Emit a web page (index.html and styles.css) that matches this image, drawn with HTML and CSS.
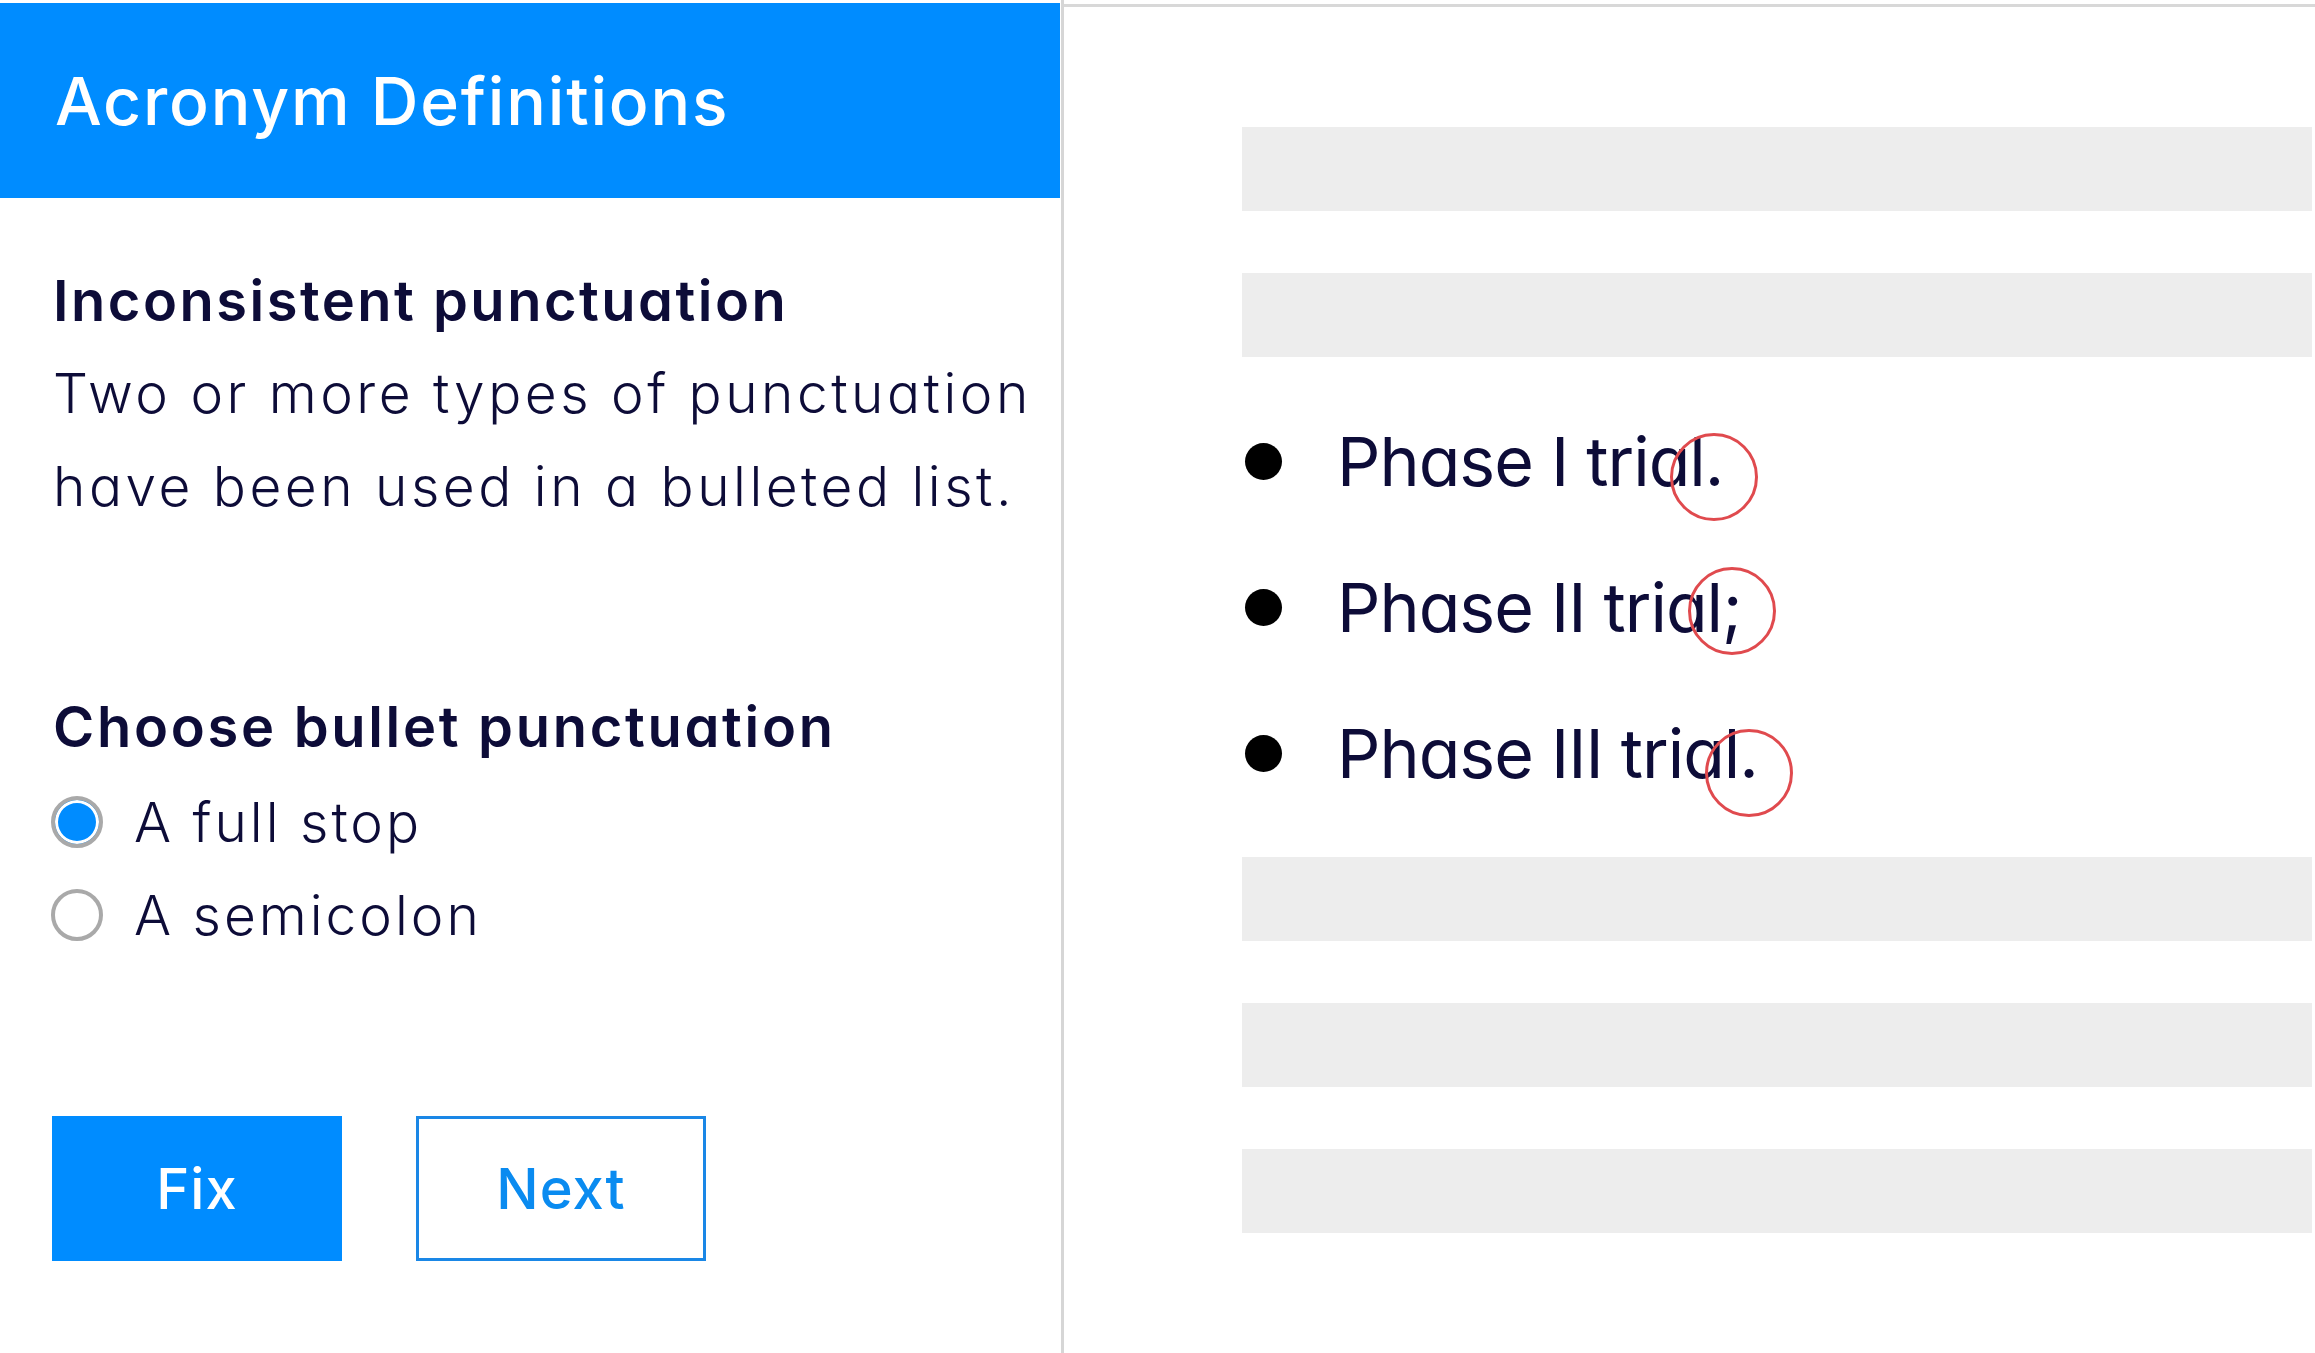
FILE: index.html
```html
<!DOCTYPE html>
<html lang="en">
<head>
<meta charset="utf-8">
<title>Acronym Definitions</title>
<link rel="stylesheet" href="styles.css">
</head>
<body>
<div class="app">
  <aside class="panel">
    <header class="panel-header">
      <h1 class="panel-title">Acronym Definitions</h1>
    </header>
    <section class="issue">
      <h2 class="issue-title">Inconsistent punctuation</h2>
      <p class="issue-text">Two or more types of punctuation have been used in a bulleted list.</p>
    </section>
    <section class="choice">
      <h2 class="choice-title">Choose bullet punctuation</h2>
      <label class="option">
        <span class="radio radio-checked"></span>
        <span class="option-label">A full stop</span>
      </label>
      <label class="option">
        <span class="radio"></span>
        <span class="option-label">A semicolon</span>
      </label>
    </section>
    <div class="actions">
      <button class="btn btn-primary">Fix</button>
      <button class="btn btn-outline">Next</button>
    </div>
  </aside>
  <main class="document">
    <div class="doc-lines">
      <div class="bar"></div>
      <div class="bar"></div>
      <div class="bullet-item"><span class="dot"></span><span class="item-text">Phase I trial<span class="mark mark-1">.</span></span></div>
      <div class="bullet-item"><span class="dot"></span><span class="item-text">Phase II trial<span class="mark mark-2">;</span></span></div>
      <div class="bullet-item"><span class="dot"></span><span class="item-text">Phase III trial<span class="mark mark-3">.</span></span></div>
      <div class="bar"></div>
      <div class="bar"></div>
      <div class="bar"></div>
    </div>
  </main>
</div>
</body>
</html>
```
FILE: styles.css
```css
* { box-sizing: border-box; }

html, body {
  margin: 0;
  padding: 0;
  background: #ffffff;
}

body {
  font-family: "Inter", "Noto Sans", sans-serif;
  font-feature-settings: "cv11";
  color: #0d0c38;
  width: 2315px;
  height: 1353px;
  overflow: hidden;
}

.app {
  display: flex;
  height: 1353px;
}

/* ---------- left panel ---------- */
.panel {
  width: 1064px;
  flex: 0 0 1064px;
  padding-top: 3px;
  border-right: 3px solid #d6d6d6;
  display: flex;
  flex-direction: column;
}

.panel-header {
  width: 1060px;
  height: 195px;
  background: #008cff;
  display: flex;
  align-items: center;
  padding-left: 55px;
}

.panel-title {
  margin: 0;
  font-size: 66px;
  font-weight: 500;
  color: #ffffff;
  letter-spacing: 1.8px;
  line-height: 1;
}

.issue {
  padding-left: 53px;
  margin-top: 68px;
}

.issue-title,
.choice-title {
  margin: 0;
  font-size: 56px;
  font-weight: 600;
  line-height: 70px;
  letter-spacing: 2.5px;
}

.issue-text {
  margin: 11px 0 0;
  font-size: 55px;
  font-weight: 300;
  line-height: 93px;
  letter-spacing: 3.5px;
  width: 1005px;
}

.choice {
  padding-left: 51px;
  margin-top: 159px;
}

.choice-title {
  padding-left: 2px;
  margin-bottom: 13px;
  letter-spacing: 2.7px;
}

.option {
  display: flex;
  align-items: center;
  height: 93px;
  gap: 31px;
  font-size: 55px;
  font-weight: 300;
  letter-spacing: 3px;
}

.radio {
  width: 52px;
  height: 52px;
  flex: 0 0 52px;
  border-radius: 50%;
  border: 4px solid #a9a9a9;
  background: #ffffff;
}

.radio-checked {
  background: #008cff;
  box-shadow: inset 0 0 0 3px #ffffff;
}

.actions {
  display: flex;
  gap: 74px;
  padding-left: 52px;
  margin-top: 155px;
}

.btn {
  width: 290px;
  height: 145px;
  font-family: "Inter", "Noto Sans", sans-serif;
  font-size: 56px;
  font-weight: 500;
  letter-spacing: 1px;
  border: 0;
  padding: 0;
  cursor: pointer;
}

.btn-primary {
  background: #008cff;
  color: #ffffff;
}

.btn-outline {
  background: #ffffff;
  color: #0a8bf0;
  border: 3px solid #1a87e6;
}

/* ---------- document preview ---------- */
.document {
  flex: 1;
  margin-top: 4px;
  border-top: 3px solid #d8d8d8;
  padding: 120px 3px 0 178px;
}

.doc-lines {
  display: flex;
  flex-direction: column;
  gap: 62px;
}

.bar {
  height: 84px;
  background: #ededed;
}

.bullet-item {
  height: 84px;
  display: flex;
  align-items: center;
  gap: 55px;
  padding-left: 3px;
}

.dot {
  width: 37px;
  height: 37px;
  flex: 0 0 37px;
  border-radius: 50%;
  background: #000000;
}

.item-text {
  font-size: 68px;
  font-weight: 400;
  line-height: 84px;
  letter-spacing: -1px;
}

.mark {
  position: relative;
}

.mark::after {
  content: "";
  position: absolute;
  left: 50%;
  top: 50%;
  width: 82px;
  height: 82px;
  border: 3.5px solid #e04a4e;
  border-radius: 50%;
  transform: translate(-50%, calc(-50% + var(--dy, 0px)));
}

.mark-1 { --dy: 16px; }
.mark-2 { --dy: 4px; }
.mark-3 { --dy: 20px; }
```
